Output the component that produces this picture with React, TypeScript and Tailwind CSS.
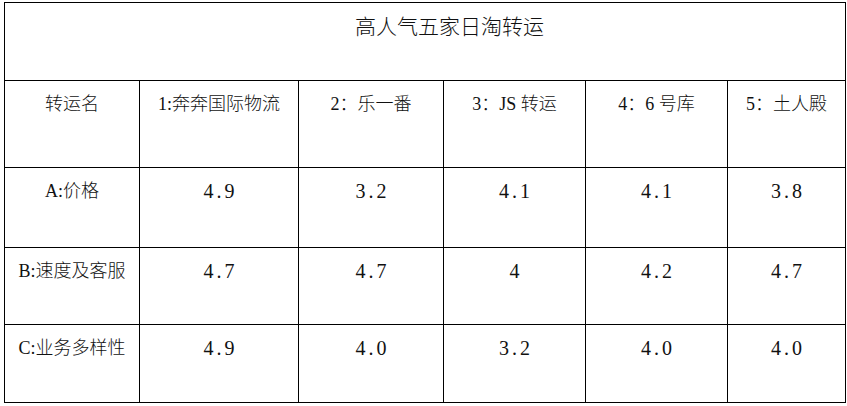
import React from "react";

const headers = ["转运名", "1:奔奔国际物流", "2：乐一番", "3：JS 转运", "4：6 号库", "5：土人殿"];

const rows = [
  { label: "A:价格", values: ["4.9", "3.2", "4.1", "4.1", "3.8"], h: "h-[80px]" },
  { label: "B:速度及客服", values: ["4.7", "4.7", "4", "4.2", "4.7"], h: "h-[77px]" },
  { label: "C:业务多样性", values: ["4.9", "4.0", "3.2", "4.0", "4.0"], h: "h-[78px]" },
];

const font = "font-['Liberation_Serif','Noto_Sans_CJK_SC',serif] font-light";

export default function App() {
  return (
    <div className="w-[847px] h-[406px] bg-white pl-[4px] pt-[2px] text-[#111]">
      <div className={`w-[842px] border-l border-t border-black ${font}`}>
        <div className="h-[78px] border-r border-b border-black pt-[12px] pl-[49px] text-center text-[21px] leading-[24px]">
          高人气五家日淘转运
        </div>
        <div className="grid grid-cols-[135px_159px_145px_142px_142px_118px]">
          {headers.map((t) => (
            <div
              key={t}
              className="h-[87px] border-r border-b border-black pt-[11px] text-center text-[18px] leading-[24px]"
            >
              {t}
            </div>
          ))}
          {rows.map((r) => (
            <React.Fragment key={r.label}>
              <div
                className={`${r.h} border-r border-b border-black pt-[11px] text-center text-[18px] leading-[24px]`}
              >
                {r.label}
              </div>
              {r.values.map((v, i) => (
                <div
                  key={i}
                  className={`${r.h} border-r border-b border-black pt-[11px] pl-[3px] text-center text-[20px] leading-[24px] tracking-[3px]`}
                >
                  {v}
                </div>
              ))}
            </React.Fragment>
          ))}
        </div>
      </div>
    </div>
  );
}
